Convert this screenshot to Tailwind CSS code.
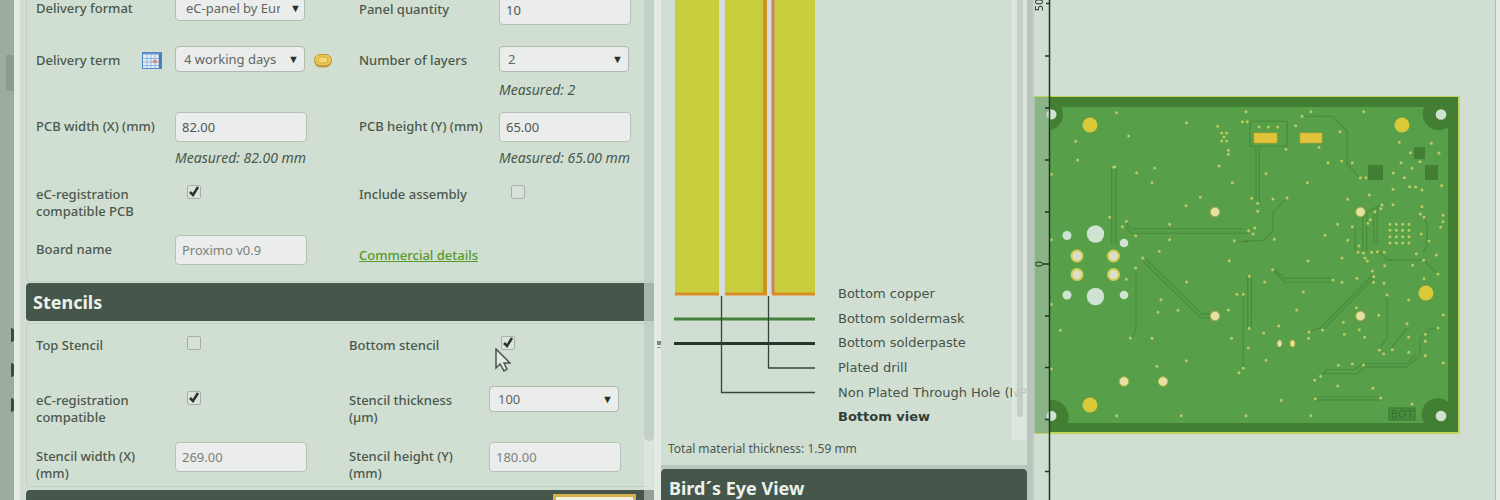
<!DOCTYPE html>
<html lang="en">
<head>
  <meta charset="UTF-8">
  <meta name="viewport" content="width=device-width, initial-scale=1.0">
  <title>PCB Configurator</title>
  <script src="https://cdn.jsdelivr.net/npm/@tailwindcss/browser@4"></script>
</head>
<body class="h-screen overflow-hidden bg-[#d1dfd2] font-['Noto_Sans',sans-serif] text-[13px] leading-[17px] text-[#4a584d]">

  <div class="grid h-full grid-cols-[14px_647fr_372fr_467fr]">

    <!-- Collapsed sidebar -->
    <aside class="relative overflow-hidden bg-[#9eac9f]">
      <div class="absolute right-0 top-[55px] h-9 w-2 bg-[#8d9b8f]"></div>
      <div class="absolute right-0 top-[328px] flex w-[3px] flex-col gap-[21px]">
        <span class="h-[14px] rounded-r-full bg-[#3b4a40]"></span>
        <span class="h-[14px] rounded-r-full bg-[#3b4a40]"></span>
        <span class="h-[14px] rounded-r-full bg-[#3b4a40]"></span>
      </div>
    </aside>

    <!-- Order form -->
    <section class="relative flex border-l-[6px] border-r-[7px] border-[#e3ebe4] pl-[6px]">
      <form class="relative h-screen min-w-0 flex-1 overflow-hidden">
        <div class="-mt-[6px] h-[288px] rounded-b-sm border border-[#c2d0c3] pl-[9px]">
          <div class="grid h-[51px] grid-cols-[139px_184px_140px_1fr] items-start">
            <label for="format" class="pt-[5px] font-medium">Delivery format</label>
            <div class="relative w-[130px]">
              <select id="format" class="h-[26px] w-full appearance-none overflow-hidden text-clip whitespace-nowrap rounded-sm border border-[#aebbb0] bg-[#ebecec] pl-[10px] pr-6 text-[#5f6862]"><option>eC-panel by Eur</option></select>
              <span class="pointer-events-none absolute right-1 top-1 text-[11px] text-[#27302a]">▼</span>
            </div>
            <label for="quantity" class="pt-[6px] font-medium">Panel quantity</label>
            <input id="quantity" type="text" value="10" class="h-[30px] w-[132px] rounded-sm border border-[#b4c1b6] bg-[#ebecec] px-[6px] text-[#4f5852]">
          </div>
          <div class="grid h-[66px] grid-cols-[139px_184px_140px_1fr] items-start">
            <div class="flex justify-between pr-[13px] pt-[6px]">
              <label for="term" class="font-medium">Delivery term</label>
              <svg class="h-[17px] w-5" viewBox="0 0 20 17">
                <rect x=".5" y=".5" width="19" height="16" fill="#e4eef4" stroke="#4f86c6"/>
                <path d="M1 1.500h18" stroke="#5f92cf" stroke-width="2"/>
                <path d="M1 6.500h18M1 10h18M1 13.500h18M5 3v13M9 3v13M13 3v13" stroke="#8fb6dc"/>
                <path d="M18 2v14" stroke="#4678bd" stroke-width="2.500"/>
                <rect x="11" y="8" width="4" height="3" fill="#d98a84"/>
              </svg>
            </div>
            <div class="flex items-start gap-[9px]">
              <div class="relative w-[130px]">
                <select id="term" class="h-[26px] w-full appearance-none rounded-sm border border-[#aebbb0] bg-[#ebecec] pl-2 text-[#5f6862]"><option>4 working days</option></select>
                <span class="pointer-events-none absolute right-[6px] top-1 text-[11px] text-[#27302a]">▼</span>
              </div>
              <svg class="mt-2 h-[14px] w-[18px]" viewBox="0 0 18 14">
                <rect x=".5" y="2" width="17" height="11.500" rx="6" fill="#c39a33"/>
                <rect x=".5" y=".5" width="17" height="11" rx="5.500" fill="#ecc94b" stroke="#bc9640"/>
                <rect x="4" y="3" width="10" height="6" rx="3" fill="#f2d976" stroke="#d2a93c"/>
              </svg>
            </div>
            <label for="layers" class="pt-[6px] font-medium">Number of layers</label>
            <div>
              <div class="relative w-[130px]">
                <select id="layers" class="h-[26px] w-full appearance-none rounded-sm border border-[#aebbb0] bg-[#ebecec] pl-2 text-[#5f6862]"><option>2</option></select>
                <span class="pointer-events-none absolute right-[6px] top-1 text-[11px] text-[#27302a]">▼</span>
              </div>
              <p class="pt-[9px] text-[14px] italic leading-[17px]">Measured: 2</p>
            </div>
          </div>
          <div class="grid h-[68px] grid-cols-[139px_184px_140px_1fr] items-start">
            <label for="width" class="pt-[6px] font-medium">PCB width (X) (mm)</label>
            <div>
              <input id="width" type="text" value="82.00" class="block h-[30px] w-[132px] rounded-sm border border-[#b4c1b6] bg-[#ebecec] px-[6px] text-[#4f5852]">
              <p class="pt-[7px] text-[14px] italic leading-[17px]">Measured: 82.00 mm</p>
            </div>
            <label for="height" class="pt-[6px] font-medium">PCB height (Y) (mm)</label>
            <div>
              <input id="height" type="text" value="65.00" class="block h-[30px] w-[132px] rounded-sm border border-[#b4c1b6] bg-[#ebecec] px-[6px] text-[#4f5852]">
              <p class="pt-[7px] text-[14px] italic leading-[17px]">Measured: 65.00 mm</p>
            </div>
          </div>
          <div class="grid h-[55px] grid-cols-[139px_184px_140px_1fr] items-start">
            <label for="registration" class="pt-[6px] font-medium">eC-registration<br>compatible PCB</label>
            <div class="relative ml-3 mt-[5px] size-[14px]">
              <input id="registration" type="checkbox" checked class="peer block size-full appearance-none rounded-xs border border-[#a5b1a7] bg-[#dce3dc]">
              <svg class="pointer-events-none absolute inset-0 hidden peer-checked:block" viewBox="0 0 14 14" fill="none" stroke="#2b332e" stroke-width="2.500"><path d="M3 7l3 3 5-8"/></svg>
            </div>
            <label for="assembly" class="pt-[6px] font-medium">Include assembly</label>
            <div class="relative ml-3 mt-[5px] size-[14px]">
              <input id="assembly" type="checkbox" class="peer block size-full appearance-none rounded-xs border border-[#a5b1a7] bg-[#d8e1d8]">
              <svg class="pointer-events-none absolute inset-0 hidden peer-checked:block" viewBox="0 0 14 14" fill="none" stroke="#2b332e" stroke-width="2.500"><path d="M3 7l3 3 5-8"/></svg>
            </div>
          </div>
          <div class="grid grid-cols-[139px_184px_140px_1fr] items-start">
            <label for="board" class="pt-[6px] font-medium">Board name</label>
            <input id="board" type="text" value="Proximo v0.9" class="h-[30px] w-[132px] rounded-sm border border-[#b4c1b6] bg-[#ebecec] px-[6px] text-[#7a827c]">
            <a href="#" class="whitespace-nowrap pt-3 font-medium text-[#569a2c] underline">Commercial details</a>
          </div>
        </div>

        <h2 class="mt-px h-[38px] rounded-l-sm bg-[#46564b] px-[7px] text-[18px] font-bold leading-[38px] text-[#eaf2eb]">Stencils</h2>

        <div class="mt-[2px] h-[164px] rounded-sm border border-[#c2d0c3] pl-[9px] pt-[7px]">
          <div class="grid h-[55px] grid-cols-[139px_174px_140px_1fr] items-start">
            <label for="top" class="pt-[6px] font-medium">Top Stencil</label>
            <div class="relative ml-3 mt-[5px] size-[14px]">
              <input id="top" type="checkbox" class="peer block size-full appearance-none rounded-xs border border-[#a5b1a7] bg-[#d8e1d8]">
              <svg class="pointer-events-none absolute inset-0 hidden peer-checked:block" viewBox="0 0 14 14" fill="none" stroke="#2b332e" stroke-width="2.500"><path d="M3 7l3 3 5-8"/></svg>
            </div>
            <label for="bottom" class="pt-[6px] font-medium">Bottom stencil</label>
            <div class="relative ml-3 mt-[5px] size-[14px]">
              <input id="bottom" type="checkbox" checked class="peer block size-full appearance-none rounded-xs border border-[#a5b1a7] bg-[#dce3dc]">
              <svg class="pointer-events-none absolute inset-0 hidden peer-checked:block" viewBox="0 0 14 14" fill="none" stroke="#2b332e" stroke-width="2.500"><path d="M3 7l3 3 5-8"/></svg>
              <!-- Mouse pointer -->
              <svg class="pointer-events-none absolute -left-[6px] top-3 h-6 w-4" viewBox="0 0 16 24"><path d="M1 1v19l4-4 4 7 3-2-3-6h6z" fill="#e3e9e4" stroke="#4b544e" stroke-width="1.500"/></svg>
            </div>
          </div>
          <div class="grid h-[56px] grid-cols-[139px_174px_140px_1fr] items-start">
            <label for="compatible" class="pt-[6px] font-medium">eC-registration<br>compatible</label>
            <div class="relative ml-3 mt-[5px] size-[14px]">
              <input id="compatible" type="checkbox" checked class="peer block size-full appearance-none rounded-xs border border-[#a5b1a7] bg-[#dce3dc]">
              <svg class="pointer-events-none absolute inset-0 hidden peer-checked:block" viewBox="0 0 14 14" fill="none" stroke="#2b332e" stroke-width="2.500"><path d="M3 7l3 3 5-8"/></svg>
            </div>
            <label for="thickness" class="pt-[6px] font-medium">Stencil thickness<br>(µm)</label>
            <div class="relative w-[130px]">
              <select id="thickness" class="h-[26px] w-full appearance-none rounded-sm border border-[#aebbb0] bg-[#ebecec] pl-2 text-[#5f6862]"><option>100</option></select>
              <span class="pointer-events-none absolute right-[6px] top-1 text-[11px] text-[#27302a]">▼</span>
            </div>
          </div>
          <div class="grid grid-cols-[139px_174px_140px_1fr] items-start">
            <label for="stencilWidth" class="pt-[6px] font-medium">Stencil width (X)<br>(mm)</label>
            <input id="stencilWidth" type="text" value="269.00" class="h-[30px] w-[132px] rounded-sm border border-[#b4c1b6] bg-[#ebecec] px-[6px] text-[#7a827c]">
            <label for="stencilHeight" class="pt-[6px] font-medium">Stencil height (Y)<br>(mm)</label>
            <input id="stencilHeight" type="text" value="180.00" class="h-[30px] w-[132px] rounded-sm border border-[#b4c1b6] bg-[#ebecec] px-[6px] text-[#7a827c]">
          </div>
        </div>

        <div class="mt-[3px] flex h-[38px] justify-end rounded-l-sm bg-[#46564b] pr-[18px] pt-1">
          <button type="button" aria-label="Calculate" class="h-7 w-[83px] border-[3px] border-[#d6b04b] bg-[#f3f1e2]"></button>
        </div>
      </form>

      <!-- Scrollbar -->
      <div class="absolute inset-y-0 right-0 w-[10px] bg-[#e4ece5]/50">
        <div class="h-[441px] rounded-b-full bg-[#b3c1b5]/60"></div>
      </div>
      <!-- Splitter handle -->
      <div class="absolute -right-[7px] top-[341px] h-[7px] w-1 border-b border-[#8c998f]">
        <div class="h-1 bg-[#7b897e]"></div>
      </div>
    </section>

    <!-- Build-up -->
    <section class="flex flex-col overflow-hidden border-r-[6px] border-[#b9c6bb]">
      <div class="relative h-[440px] shrink-0 overflow-hidden">
        <svg class="block h-[440px] w-[500px] font-['DejaVu_Sans',sans-serif] text-[13px]" viewBox="0 0 500 440">
          <path d="M14 0h44v293h-44zM64 0h40v293h-40zM112 0h42v293h-42z" fill="#c8cd3d"/>
          <path d="M58.500 0v296M62.500 0v296" stroke="#d5e6a4"/>
          <path d="M60.500 0v296M108 0v296" stroke="#d8dddd" stroke-width="3"/>
          <path d="M104 0v293" stroke="#cc9420" stroke-width="4"/>
          <path d="M112 0v293" stroke="#cf8264" stroke-width="3"/>
          <path d="M14 294h44M64 294h42M111 294h43" stroke="#dd8b26" stroke-width="3"/>
          <path d="M13 319h141" stroke="#438039" stroke-width="3"/>
          <path d="M13 343.500h141" stroke="#29352d" stroke-width="3"/>
          <path d="M60.500 296v96.500h93.500M107.500 296v72h46.500" fill="none" stroke="#36433a" stroke-width="1.300"/>
          <g fill="#46534a">
            <text x="177" y="298">Bottom copper</text>
            <text x="177" y="323">Bottom soldermask</text>
            <text x="177" y="347">Bottom solderpaste</text>
            <text x="177" y="372">Plated drill</text>
            <text x="177" y="397">Non Plated Through Hole (NP</text>
            <text x="177" y="421" font-weight="bold" fill="#323e36">Bottom view</text>
          </g>
        </svg>
        <div class="absolute inset-y-0 right-0 w-[15px] border-l-2 border-[#e1eae2] bg-[#e0e8e1]/75">
          <div class="ml-[3px] h-[417px] w-[6px] rounded-b-full bg-[#bdcabf]/80"></div>
        </div>
      </div>
      <p class="h-[25px] shrink-0 pl-[7px] text-[12px] leading-[17px]">Total material thickness: 1.59 mm</p>
      <div class="h-[46px] shrink-0 border-t-4 border-[#b9c6bb]">
        <h2 class="h-full rounded-t-sm bg-[#46564b] px-2 text-[18px] font-bold leading-[38px] text-[#eaf2eb]">Bird´s Eye View</h2>
      </div>
    </section>

    <!-- Board view -->
    <section class="relative overflow-hidden border-r-4 border-[#e3ebe4]">
      <svg class="block h-[500px] w-[463px]" viewBox="1033 0 463 500">
        <path d="M1033 96h427v338h-427z" fill="#c3d45c"/>
        <path d="M1033 97h425v335h-425z" fill="#437f32"/>
        <path d="M1033 107h415v316h-415z" fill="#579f48"/>
        <path d="M1051 99a16 16 0 0 1 0 31zM1441 130a16 16 0 0 1-16-24h25v21zM1050 400a17 17 0 0 1 17 24h-17zM1448 402a16 16 0 0 0-23 22h25z" fill="#437f32"/>

        <!-- Traces -->
        <g fill="none" stroke="#428138" stroke-width="4" opacity=".55">
          <g transform="translate(1020 80) scale(.3333)">
            <path d="M275 262v230M288 262v230M319 430l14 16h340M319 440l12 20h350M690 125v74M650 485h40M690 124h112v75h-112zM708 200v165M718 200v165"/>
          </g>
          <g transform="translate(1250 80) scale(.3333)">
            <path d="M160 109h90l41 45v97l38 42M111 354l-43 44v55l-27 29h-60M315 440v75M338 405v110M350 400v115M382 380v110M372 400v90M522 412l10 20v60l-12 25M345 400l45-25"/>
          </g>
          <g transform="translate(1020 250) scale(.3333)">
            <path d="M368 33l174 170h38M378 28l166 164h36M348 54v185l-12 24M683 79v156M694 79v156M670 133v220"/>
          </g>
          <g transform="translate(1250 250) scale(.3333)">
            <path d="M68 59l37 38h144M75 59l30 26h144M367 75l-155 158-35 13M372 82l-154 158M411 135v130l-26 34M471 235l-46 58M390 7l20 23h110l44 42M212 379l20-20h80l24-15M218 371h102l25-20h125l40-35v-50l30-30h24M341 341h128l30-29M196 440h196M196 450h196"/>
          </g>
        </g>

        <!-- Pads without paste -->
        <path d="M1414 147h11v12h-11zM1368 165h15v15h-15zM1425 165h13v15h-13z" fill="#437f32"/>
        <path d="M1254 133h23v10h-23zM1300 133h22v10h-22z" fill="#e1c33b" stroke="#c7a92e" stroke-width=".6"/>

        <!-- Vias -->
        <g fill="none" stroke="#bccb62" stroke-width="9" stroke-linecap="round">
          <path transform="translate(1020 80) scale(.3333)" d="M290 98h0M326 168h0M167 184h0M173 240h0M500 128h0M593 139h0M605 159h0M620 159h0M612 171h0M605 183h0M620 183h0M625 211h0M625 223h0M597 258h0M637 308h0M350 278h0M404 264h0M396 308h0M541 352h0M498 377h0M269 412h0M319 424h0M307 440h0M347 467h0M449 433h0M449 479h0M418 514h0M368 534h0M643 482h0M94 283h0M94 479h0M667 125h0M682 125h0M678 95h0M686 452h0M281 261h3"/>
          <path transform="translate(1250 80) scale(.3333)" d="M183 95h0M156 109h0M137 137h0M341 95h0M270 155h0M27 141h0M55 141h0M83 141h0M108 208h0M207 202h0M234 248h0M275 243h0M307 248h0M331 293h0M348 293h0M48 281h0M172 308h0M69 357h0M111 354h0M5 355h0M23 370h0M23 394h0M14 444h0M9 462h0M73 478h0M225 466h0M263 433h0M293 358h0M358 345h0M307 440h0M293 481h0M448 187h0M544 190h0M567 219h0M481 218h0M510 245h0M453 248h0M486 265h0M463 293h0M430 279h0M429 328h0M479 320h0M497 321h0M516 330h0M575 317h0M429 374h0M516 380h0M511 402h0M522 412h0M579 406h0M579 425h0M572 442h0M514 462h0M537 483h0M499 521h0M559 525h0M396 375h0M393 386h0M375 395h0M361 419h0M354 430h0M327 498h0M324 517h0M340 519h0M365 517h0M382 515h0M403 517h0M345 534h0M276 534h0M420 433h0M439 433h0M458 433h0M477 433h0M420 451h0M439 451h0M458 451h0M477 451h0M420 470h0M439 470h0M458 470h0M477 470h0M420 489h0M439 489h0M458 489h0M477 489h0"/>
          <path transform="translate(1020 250) scale(.3333)" d="M347 54h0M319 88h0M500 96h0M628 32h0M688 79h0M651 133h0M670 133h0M625 180h0M423 149h0M414 187h0M474 181h0M331 264h0M396 265h0M635 265h0M688 235h0M685 293h0M670 355h0M657 368h0M499 332h0M411 349h0M290 497h0M484 497h0M678 497h0M121 241h0M94 163h0M94 357h0"/>
          <path transform="translate(1250 250) scale(.3333)" d="M174 33h0M68 59h0M44 96h0M160 126h0M140 180h0M86 228h0M41 249h0M48 331h0M249 90h0M276 97h0M321 85h0M352 33h0M367 63h0M371 80h0M371 97h0M402 100h0M404 47h0M488 46h0M521 31h0M564 72h0M522 86h0M476 150h0M411 135h0M319 173h0M386 196h0M280 217h0M328 239h0M344 262h0M283 253h0M218 240h0M177 246h0M176 265h0M471 221h0M564 234h0M526 253h0M526 274h0M526 317h0M580 195h0M580 339h0M388 300h0M401 311h0M427 299h0M341 345h0M307 341h0M265 346h0M212 379h0M194 391h0M263 408h0M369 415h0M196 446h0M392 444h0M94 451h0M183 497h0M486 462h0M476 261h0M476 307h0"/>
        </g>

        <!-- Ruler strip over the board edge -->
        <path d="M1033 97h16v336h-16z" fill="#8ab386"/>
        <path d="M1033 0h2v500h-2z" fill="#c4cfc6" opacity=".6"/>

        <!-- Fiducials and holes -->
        <g fill="#d9c936">
          <circle cx="1090" cy="125" r="7.500"/><circle cx="1402" cy="125" r="7.500"/>
          <circle cx="1090" cy="405" r="7.500"/><circle cx="1426" cy="293" r="7.500"/>
        </g>
        <g fill="#cfe3d2">
          <circle cx="1051.500" cy="114.500" r="5"/><circle cx="1441" cy="114.500" r="5.300"/>
          <circle cx="1051.500" cy="416" r="5"/><circle cx="1441" cy="416" r="5.300"/>
          <circle cx="1095.500" cy="234" r="8.700"/><circle cx="1095.500" cy="296.500" r="8.700"/>
          <circle cx="1067" cy="235.500" r="4.500"/><circle cx="1124" cy="243" r="4.300"/>
          <circle cx="1067" cy="295" r="4.500"/><circle cx="1124" cy="295" r="4.300"/>
        </g>
        <g fill="#dcdfcb" stroke="#d3cf50" stroke-width="2">
          <circle cx="1077" cy="256" r="5.500"/><circle cx="1113.500" cy="256" r="5.500"/>
          <circle cx="1077" cy="274.500" r="5.500"/><circle cx="1113.500" cy="274.500" r="5.500"/>
        </g>
        <g fill="#e3e2a6" stroke="#b9ab3e">
          <circle cx="1215" cy="212" r="4.700"/><circle cx="1215" cy="316" r="4.700"/>
          <circle cx="1360.500" cy="212" r="4.700"/><circle cx="1360.500" cy="316" r="4.700"/>
          <circle cx="1124" cy="381.500" r="4.700"/><circle cx="1163" cy="381.500" r="4.700"/>
          <ellipse cx="1279.500" cy="343.500" rx="2.500" ry="3.500"/><ellipse cx="1292.500" cy="343.500" rx="2.500" ry="3.500"/>
        </g>
        <path d="M1389 408h26v12h-26z" fill="#4b8d3e" stroke="#397531"/>
        <text x="1402" y="418" text-anchor="middle" class="font-['DejaVu_Sans',sans-serif] text-[11px]" fill="#356f2d">BOT</text>

        <!-- Ruler -->
        <path d="M1049.500 0v500M1046 3.500h3M1045 56h4M1045 108h4M1045 160h4M1045 212h4M1043 264h6M1045 316h4M1045 367.500h4M1045 419.500h4M1045 471.500h4" stroke="#1e3424" stroke-width="1.500"/>
        <g class="font-['DejaVu_Sans',sans-serif] text-[10px]" fill="#26352b" text-anchor="middle">
          <text transform="translate(1043 5) rotate(-90)">50</text>
          <text transform="translate(1043 264) rotate(-90)">0</text>
        </g>
      </svg>
      <div class="absolute inset-y-0 right-0 w-px bg-[#aebab0]"></div>
    </section>
  </div>

</body>
</html>
